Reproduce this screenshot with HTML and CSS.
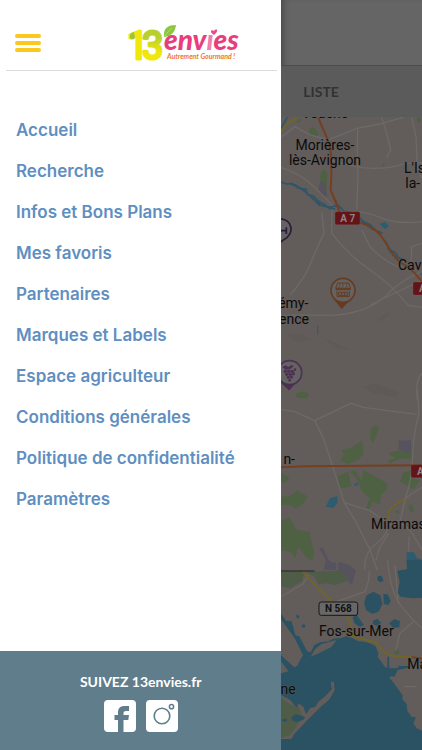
FILE: index.html
```html
<!DOCTYPE html>
<html lang="fr">
<head>
  <meta charset="UTF-8">
  <meta name="viewport" content="width=device-width, initial-scale=1.0">
  <title>13envies</title>
  <link rel="stylesheet" href="styles.css">
</head>
<body>
  <div class="app">
    <!-- Side menu -->
    <aside class="drawer">
      <header class="drawer-header">
        <button class="burger" type="button" aria-label="Menu">
          <span></span>
          <span></span>
          <span></span>
        </button>
        <a class="logo" href="#" aria-label="13envies">
          <svg width="114" height="42" viewBox="0 0 114 42" xmlns="http://www.w3.org/2000/svg">
            <defs>
              <linearGradient id="lime" x1="0" y1="0" x2="0" y2="1">
                <stop offset="0.3" stop-color="#b9d02c"/>
                <stop offset="0.65" stop-color="#f0e80c"/>
              </linearGradient>
            </defs>
            <text class="logo-digit logo-one" x="-2" y="37">1</text>
            <text class="logo-digit logo-three" x="13" y="37">3</text>
            <path d="M1 16Q0 11 5 10L6 16Q3 19 1 16Z" fill="#9bc53a"/>
            <path d="M35 15C34 6 39 3 47 3C46 10 43 14 35 15Z" fill="#8cc63f"/>
            <path d="M35 15Q39 9 43 6" fill="none" stroke="#b5da5c" stroke-width="1"/>
            <text class="logo-name" x="35" y="28">env<tspan class="logo-i">ı</tspan>es</text>
            <path d="M85 13C80 10 82 7 85 9C87 6 91 8 85 13Z" fill="#ea4a87"/>
            <text class="logo-tag" x="38" y="37">Autrement Gourmand !</text>
          </svg>
        </a>
      </header>

      <nav class="menu">
        <a href="#">Accueil</a>
        <a href="#">Recherche</a>
        <a href="#">Infos et Bons Plans</a>
        <a href="#">Mes favoris</a>
        <a href="#">Partenaires</a>
        <a href="#">Marques et Labels</a>
        <a href="#">Espace agriculteur</a>
        <a href="#">Conditions générales</a>
        <a href="#">Politique de confidentialité</a>
        <a href="#">Paramètres</a>
      </nav>

      <footer class="drawer-footer">
        <p>SUIVEZ 13envies.fr</p>
        <div class="social">
          <a href="#" aria-label="Facebook">
            <svg viewBox="0 0 32 32" xmlns="http://www.w3.org/2000/svg">
              <rect width="32" height="32" rx="4" fill="#fff"/>
              <path d="M14 32V20H10.500V15H14V12.500C14 8 16.500 6 20.500 6H25V11H22C20 11 19.500 12 19.500 13.500V15H25L24.300 20H19.500V32Z" fill="#607d8b"/>
            </svg>
          </a>
          <a href="#" aria-label="Instagram">
            <svg viewBox="0 0 32 32" xmlns="http://www.w3.org/2000/svg">
              <rect width="32" height="32" rx="4" fill="#fff"/>
              <g fill="none" stroke="#607d8b">
                <circle cx="16" cy="16" r="7.800" stroke-width="1.600"/>
                <circle cx="25.500" cy="6.700" r="2.100" stroke-width="1.500"/>
              </g>
            </svg>
          </a>
        </div>
      </footer>
    </aside>

    <!-- Page dimmed behind the menu -->
    <main class="page">
      <div class="page-bar"></div>
      <div class="tabs">
        <button class="tab" type="button">LISTE</button>
      </div>
      <div class="map">
        <svg viewBox="0 0 423 1899" preserveAspectRatio="xMinYMin slice" xmlns="http://www.w3.org/2000/svg">
          <rect width="423" height="1899" fill="#625d5a"/>

          <!-- Avignon -->
          <g transform="translate(-33 -201)">
            <g fill="#4e6143">
              <path d="M118 235L130 230L145 250L142 258L118 254Z"/>
              <path d="M152 365L165 357L172 372L170 425L150 400Z"/>
              <path d="M80 215L92 205L95 210L84 221Z"/>
              <path d="M338 340L345 342L342 352L337 350ZM440 202L453 205L450 220L442 213Z"/>
            </g>
            <path d="M150 395L165 398L172 438L158 440L145 420Z" fill="#56535f"/>
            <g class="street">
              <path d="M33 262L75 230L118 254L174 270L260 235L330 222L400 202"/>
              <path d="M33 352Q85 370 115 395T195 475"/>
              <path d="M260 480L264 380L262 300L263 235"/>
              <path d="M184 330Q250 355 310 355T405 340L456 338"/>
              <path d="M335 202L350 250L362 300L350 325M425 202L438 260L442 350L456 385"/>
            </g>
            <path d="M33 248Q45 215 82 203" class="road-yellow"/>
            <path d="M33 235L52 202" class="river"/>
            <path d="M33 396L50 402L65 400L84 414L108 418L112 434L130 438L143 452L160 462L180 476L196 476" class="river"/>
            <path d="M60 402L78 406L104 424L128 445L150 468" class="river"/>
            <path d="M145 203C155 235 180 270 182 305S187 365 182 420Q195 450 207 480" class="road-main"/>
          </g>

          <!-- Saint-Rémy / Cavaillon -->
          <g transform="translate(-33 249)">
            <path d="M78 580L100 574L117 582L108 595L82 593Z" fill="#4e6143"/>
            <g fill="#5f5a56">
              <path d="M50 405L90 398L125 420L80 425Z"/>
              <path d="M350 340L365 337L335 362L320 360Z"/>
              <path d="M280 560L310 550L385 575L380 592L310 580Z"/>
              <path d="M160 415L240 450L200 445Z"/>
            </g>
            <g class="street">
              <path d="M186 28L185 100Q240 170 300 210T415 316L456 322"/>
              <path d="M33 346L200 345Q300 335 350 285T456 215"/>
              <path d="M60 285Q105 235 122 190T162 100L155 35"/>
              <path d="M205 35Q280 30 330 52T456 65M300 315L456 240"/>
              <path d="M275 90L300 140Q340 185 405 210M456 130L425 140L424 185"/>
              <path d="M456 520Q435 540 442 600"/>
            </g>
            <path d="M140 2L152 16L178 22L205 16L222 34L244 38L265 47L278 63L300 74L318 92L338 100" class="river"/>
            <path d="M270 58L285 70L307 88L334 98M346 122L360 150L376 158L384 172L403 181" class="river"/>
            <path d="M328 72L345 66L357 78L346 87L337 80ZM356 140L373 158L370 170L350 145ZM450 218H456V228Z" fill="#2d5c70"/>
            <path d="M143 375V404" stroke="#394b5d" stroke-width="2"/>
            <path d="M195 0Q204 20 207 34Q225 50 275 70Q320 82 345 125T390 187Q420 198 456 245" class="road-main"/>
          </g>

          <!-- Miramas -->
          <g transform="translate(-33 819)">
            <g fill="#4e6143">
              <path d="M76 13L92 6L117 14L108 24L80 22Z"/>
              <path d="M302 120L312 106L327 108L318 140L308 160L301 145Z"/>
              <path d="M213 180L240 175L276 153L281 190L265 210L235 222L210 212L222 195Z"/>
              <path d="M354 190L390 180L395 187L424 184V208L390 205L358 222L356 209L378 206Z"/>
              <path d="M203 258L235 246L244 288L210 296Z"/>
              <path d="M239 244L256 241L275 272L280 240L352 280L350 300L333 314L330 342L307 335L298 358L288 354L300 325L275 303L262 270Z"/>
              <path d="M33 250L59 262L47 278L33 276Z"/>
              <path d="M33 320L60 318L82 302L114 320L95 345L75 355L60 345L33 344Z"/>
              <path d="M33 392L60 383L80 420L118 425L133 490L126 512L108 500L85 470L75 505L62 485L33 480Z"/>
              <path d="M390 275L400 248L424 240L425 265L450 270L430 298L410 285Z"/>
              <path d="M415 350L420 342L430 350L432 362L422 370ZM374 366L387 360V372Z"/>
            </g>
            <g fill="#56535f">
              <path d="M386 152L422 150L425 180L410 190L386 178Z"/>
              <path d="M148 474L158 472L178 514L199 520L198 540H160L168 512Z"/>
            </g>
            <g class="street">
              <path d="M33 58L75 65L134 92L242 40L280 52L440 73"/>
              <path d="M134 92L160 145L185 220L223 338L260 400L300 480L322 540"/>
              <path d="M442 0L447 70Q430 130 428 200T406 325L390 395"/>
              <path d="M456 292Q425 310 400 330M356 388Q360 430 320 460T284 540"/>
              <path d="M223 338L300 362L360 405Q400 390 430 435L456 480M355 430L330 470L318 510"/>
              <path d="M418 440L415 485"/>
            </g>
            <path d="M167 350L180 325L202 318L203 338L190 354ZM252 283L263 277L264 285L254 289ZM410 487H432L440 503L454 508V540H415L410 520Z" fill="#2d5c70"/>
            <path d="M405 328Q360 350 358 362T357 386" class="road-yellow"/>
            <path d="M33 232L110 229L456 226" class="road-main"/>
          </g>

          <!-- Fos-sur-Mer -->
          <g transform="translate(-33 1329)">
            <path d="M33 34H105L96 63L60 85L33 78ZM110 35L205 32L228 40L232 62L195 76L170 70L145 73L135 52Z" fill="#4e5c48"/>
            <path d="M205 5L236 15L258 30L246 76L232 62L228 40L205 32Z" fill="#56535f"/>
            <g class="street">
              <path d="M33 110L98 72L115 45M190 128L285 95L296 60L298 33"/>
              <path d="M353 0Q360 95 395 140T456 205M375 15L385 130"/>
              <path d="M375 280L390 220L430 185M400 380H440"/>
            </g>
            <g fill="#2b5263">
              <!-- gulf -->
              <path d="M33 160L48 182L65 184L76 225L88 229L111 274L122 277L133 255L150 247L175 244L190 236L213 234L228 229L248 235L263 243L285 246L300 250L316 258L325 278L324 292L336 308L348 325L352 344L370 345L358 352L368 365L378 378L388 392L398 405L397 418L410 432L412 452L425 470L438 472L430 490L440 505L456 512V570H33V537L64 537L72 522L120 472L152 440L178 418L193 391L192 366L183 365L186 388L168 407L145 426L137 440L120 445L108 463L100 440L85 430L82 447L61 420L33 405V340L55 334L33 304L33 286L73 322L81 318L99 285L75 236L33 178Z"/>
              <path d="M290 106L310 95L331 106L337 132L326 155L307 162L288 150L282 128Z"/>
              <path d="M340 102L353 103L362 122L356 135L341 132ZM323 49L334 47L341 62L331 67L322 60Z"/>
              <path d="M248 172L259 163L282 196L269 200L253 190ZM310 181L323 177L334 189L320 197L308 192Z"/>
              <path d="M357 190L374 177L390 184L388 202L370 204Z"/>
              <path d="M410 0H456V114L426 115L392 110L383 98L389 65L382 32L411 28Z"/>
              <path d="M80 163L88 168L86 176L79 173ZM97 193L107 195L104 203L95 201Z"/>
              <path d="M352 290H357L358 325L384 324L385 318H417V323L383 330L374 350L352 346L345 326L352 320Z"/>
            </g>
            <path d="M122 290L135 268L155 252L200 240L183 262L143 281Z" fill="#625d5a"/>
            <!-- sand spit -->
            <path d="M64 537L72 522L120 472L152 440L178 418L193 391L192 366L183 365L186 388L168 407L145 426L137 440L120 455L98 470L82 494L62 510L33 534V537Z" fill="#625d5a"/>
            <path d="M33 414L58 432L88 444L98 470L82 494L62 524L33 534Z" fill="#4e5c48"/>
            <path d="M64 472L78 463L104 470L103 478L82 486L68 482ZM36 479L50 475L51 483L40 486Z" fill="#2b5263"/>
            <path d="M373 273L386 268L387 282L373 283Z" fill="#4e6143"/>
            <path d="M98 35L130 70L175 115L205 135Q238 170 244 198L247 230L320 247Q340 285 375 288L430 292" class="road-yellow"/>
            <path d="M425 291L456 296" class="road-main"/>
            <path d="M33 33H133" stroke="#222" stroke-width="3"/>
          </g>

          <!-- Road badges -->
          <g class="shield">
            <rect x="162" y="284" width="75" height="39" rx="5"/>
            <rect x="396" y="495" width="75" height="39" rx="5"/>
            <rect x="390" y="1043" width="75" height="39" rx="5"/>
            <text x="200" y="315" text-anchor="middle">A 7</text>
            <text x="414" y="526">A</text>
            <text x="408" y="1074">A</text>
          </g>
          <rect x="114" y="1455" width="116" height="40" rx="7" fill="#686868" stroke="#161616" stroke-width="3"/>
          <text class="road-number" x="172" y="1485" text-anchor="middle">N 568</text>

          <!-- Town names -->
          <g class="town">
            <text x="132" y="4" text-anchor="middle">Vedène</text>
            <text x="132" y="100" text-anchor="middle">Morières-</text>
            <text x="132" y="144" text-anchor="middle">lès-Avignon</text>
            <text x="369" y="168">L'Is</text>
            <text x="373" y="214">la-</text>
            <text x="351" y="460">Cav</text>
            <text x="82" y="574" text-anchor="end">émy-</text>
            <text x="84" y="621" text-anchor="end">ence</text>
            <text x="42" y="1040" text-anchor="end">n-</text>
            <text x="270" y="1236">Miramas</text>
            <text x="226" y="1557" text-anchor="middle">Fos-sur-Mer</text>
            <text x="379" y="1657">Ma</text>
            <text x="44" y="1731" text-anchor="end">ne</text>
          </g>

          <!-- Producer pins -->
          <g class="pin pin-wine">
            <path d="M-8 305C38 305 42 352 6 370L-8 380Z"/>
            <path d="M0 341H16M16 331V351" fill="none"/>
          </g>
          <g class="pin pin-shop">
            <path d="M165 551L182 572L203 551Z" fill="#653c20"/>
            <circle cx="186" cy="520" r="36"/>
            <path d="M170 498H203L208 511V518H165V511ZM168 522V539H205V522" stroke-width="3"/>
            <path d="M165 512Q169 524 174 512Q179 524 184 512Q190 524 195 512Q201 524 208 512" fill="#653c20" stroke-width="2"/>
            <path d="M177 498L175 511M186 498V511M196 498L198 511" stroke-width="2"/>
            <path d="M173 526H200V535H173ZM182 526V535M191 526V535" stroke-width="3"/>
          </g>
          <g class="pin pin-grape">
            <path d="M3 797L24 817L43 797Z" fill="#4c3152"/>
            <circle cx="26" cy="767" r="36"/>
            <g fill="#4c3152" stroke="none">
              <path d="M4 751L13 745L22 750L32 744L38 748L27 757L15 758Z"/>
              <circle cx="13" cy="763" r="5"/>
              <circle cx="23" cy="763" r="5"/>
              <circle cx="33" cy="763" r="5"/>
              <circle cx="42" cy="758" r="4"/>
              <circle cx="17" cy="772" r="5"/>
              <circle cx="27" cy="772" r="5"/>
              <circle cx="37" cy="770" r="5"/>
              <circle cx="22" cy="781" r="5"/>
              <circle cx="31" cy="780" r="5"/>
              <circle cx="26" cy="790" r="4"/>
            </g>
          </g>
        </svg>
      </div>
    </main>
  </div>
</body>
</html>
```

FILE: styles.css
```css
:root {
  --link: #5f8fc1;
  --yellow: #fbc91e;
  --footer: #607d8b;
  --town: #0b0b0b;
}
* {
  margin: 0;
  padding: 0;
  box-sizing: border-box;
}
body {
  font-family: Inter, "Liberation Sans", sans-serif;
  background: #ffffff;
}
a {
  text-decoration: none;
}
button {
  border: 0;
  background: none;
  font: inherit;
}
.app {
  display: grid;
  grid-template-columns: 2fr 1fr;
  height: 100vh;
  overflow: hidden;
}

/* Side menu */
.drawer {
  display: flex;
  flex-direction: column;
  min-width: 0;
  background: #ffffff;
}
.drawer-header {
  display: flex;
  justify-content: space-between;
  align-items: center;
  margin: 0 4px 0 6px;
  padding: 22px 34px 6px 9px;
  border-bottom: 1px solid #dddddd;
}
.burger {
  display: flex;
  flex-direction: column;
  gap: 3px;
  width: 26px;
}
.burger span {
  height: 4px;
  border-radius: 2px;
  background: var(--yellow);
}
.logo svg {
  display: block;
  overflow: visible;
}
.logo-digit {
  font-family: Roboto, sans-serif;
  font-size: 38px;
  font-weight: 400;
  stroke-width: 3;
  stroke-linejoin: round;
}
.logo-one {
  fill: #f0e80c;
  stroke: #f0e80c;
}
.logo-three {
  fill: url(#lime);
  stroke: url(#lime);
}
.logo-name {
  font-family: Lato, sans-serif;
  font-size: 28px;
  font-weight: 900;
  font-style: italic;
  fill: #e83e7e;
}
.logo-i {
  fill: #ef7fae;
}
.logo-tag {
  font-family: Lato, sans-serif;
  font-size: 7px;
  font-weight: 700;
  font-style: italic;
  fill: #ec7a2c;
}

.menu {
  flex: 1;
  display: flex;
  flex-direction: column;
  padding: 39px 16px 0;
}
.menu a {
  color: var(--link);
  font-size: 17px;
  font-weight: 600;
  line-height: 41px;
}

.drawer-footer {
  display: flex;
  flex-direction: column;
  align-items: center;
  gap: 8px;
  padding: 20px 0 18px;
  background: var(--footer);
}
.drawer-footer p {
  color: #ffffff;
  font-family: Lato, sans-serif;
  font-size: 14px;
  font-weight: 700;
  line-height: 21px;
}
.social {
  display: flex;
  gap: 10px;
}
.social svg {
  display: block;
  width: 32px;
  height: 32px;
}

/* Dimmed page */
.page {
  display: flex;
  flex-direction: column;
  min-width: 0;
  background: #656565;
  box-shadow: inset 6px 0 6px -4px rgba(0, 0, 0, 0.3);
}
.page-bar {
  height: 65px;
}
.tabs {
  height: 52px;
  padding: 0 22px;
  border-top: 1px solid #4c4c4c;
  background: #5b5b5b;
}
.tab {
  height: 50px;
  color: #323232;
  font-family: Lato, sans-serif;
  font-size: 14px;
  font-weight: 700;
}
.map {
  flex: 1;
  min-height: 0;
  overflow: hidden;
}
.map svg {
  display: block;
  width: 100%;
  height: 100%;
}

/* Map drawing, three units to a pixel */
.street {
  fill: none;
  stroke: #6c6967;
  stroke-width: 4;
}
.river {
  fill: none;
  stroke: #2f5569;
  stroke-width: 5;
}
.road-main {
  fill: none;
  stroke: #753f20;
  stroke-width: 6;
}
.road-yellow {
  fill: none;
  stroke: #716622;
  stroke-width: 5;
}
.town {
  font-family: Roboto, sans-serif;
  font-size: 42px;
  fill: var(--town);
  stroke: #625d5a;
  stroke-width: 2;
  paint-order: stroke;
}
.shield rect {
  fill: #641419;
  stroke: #77595a;
  stroke-width: 1;
}
.shield text {
  font-family: Roboto, sans-serif;
  font-size: 30px;
  font-weight: 700;
  fill: #918283;
}
.road-number {
  font-family: Roboto, sans-serif;
  font-size: 30px;
  font-weight: 700;
  fill: #111111;
}
.pin {
  fill: #656263;
  stroke-width: 5;
}
.pin-wine {
  stroke: #291b39;
}
.pin-shop {
  stroke: #653c20;
}
.pin-grape {
  stroke: #4c3152;
}
```
